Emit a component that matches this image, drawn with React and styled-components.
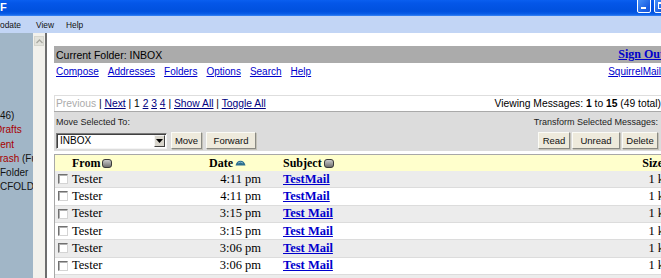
import React from 'react';
import styled, { createGlobalStyle } from 'styled-components';

const Global = createGlobalStyle`
  html, body { margin: 0; padding: 0; width: 661px; height: 278px; overflow: hidden; background: #fff; }
  #root { width: 661px; height: 278px; }
`;

const SANS = '"Liberation Sans", Arial, sans-serif';
const SERIF = '"Liberation Serif", "Times New Roman", serif';

const Window = styled.div`
  width: 661px;
  height: 278px;
  display: flex;
  flex-direction: column;
  overflow: hidden;
  font-family: ${SANS};
`;

const TitleBar = styled.div`
  height: 16px;
  flex: none;
  display: flex;
  justify-content: space-between;
  align-items: flex-start;
  overflow: hidden;
  background: linear-gradient(to bottom, #0a5ff0 0%, #0456e8 20%, #0051de 70%, #0a5ee8 88%, #3b86f4 100%);
`;

const TitleText = styled.span`
  color: #fff;
  font: bold 11px ${SANS};
  line-height: 15px;
`;

const WinButtons = styled.div`
  display: flex;
  gap: 3px;
  margin-top: -2px;
  margin-right: -7px;
`;

const WinButton = styled.span`
  position: relative;
  width: 14px;
  height: 15px;
  box-sizing: border-box;
  border: 1px solid #fff;
  border-radius: 2px;
  background: linear-gradient(135deg, #4a94fa, #1b5fe2 70%, #1a56d6);
  &::after {
    content: '';
    position: absolute;
    box-sizing: border-box;
    ${(p) =>
      p.kind === 'min'
        ? 'left: 3px; bottom: 3px; width: 5px; height: 2px; background: #fff;'
        : 'left: 3px; top: 3px; width: 8px; height: 7px; border: 1px solid #fff; border-top-width: 2px;'}
  }
`;

const MenuBar = styled.div`
  height: 17px;
  flex: none;
  display: flex;
  align-items: center;
  background: #c2d5f5;
  font: 8.4px ${SANS};
  color: #111;
`;

const MenuItem = styled.span`
  margin-left: ${(p) => p.offset}px;
`;

const Body = styled.div`
  flex: 1;
  display: flex;
  min-height: 0;
`;

const FolderPane = styled.div`
  width: 33px;
  flex: none;
  background: #a1b6c7;
  overflow: hidden;
  padding-top: 76px;
  box-sizing: border-box;
  font: 10px ${SANS};
`;

const PaneLine = styled.div`
  height: 14.3px;
  line-height: 14.3px;
  white-space: nowrap;
  color: ${(p) => (p.red ? '#a80000' : '#111')};
  margin-left: ${(p) => p.shift || 0}px;
`;

const Plain = styled.span`
  color: #111;
`;

const ScrollStrip = styled.div`
  width: 12px;
  flex: none;
  background: #f2f1ec;
  padding: 3px 0 0 1px;
  box-sizing: border-box;
`;

const ScrollUp = styled.div`
  width: 10px;
  height: 10px;
  background: #e3e3dc;
  border: 1px solid #d6d6ce;
  box-sizing: border-box;
  display: flex;
  align-items: center;
  justify-content: center;
`;

const Divider = styled.div`
  width: 2px;
  flex: none;
  background: #6e6e6e;
`;

const Content = styled.div`
  flex: 1;
  overflow: hidden;
  padding: 13px 0 0 7px;
`;

const Inner = styled.div`
  width: 607px;
`;

const FolderBar = styled.div`
  height: 17px;
  margin-right: -4px;
  background: #ababab;
  display: flex;
  justify-content: space-between;
  align-items: center;
  padding: 0 1px 0 2px;
  font-size: 10.5px;
  color: #000;
`;

const SignOut = styled.a`
  font: bold 12px ${SERIF};
  color: #0000cc;
  text-decoration: underline;
`;

const NavRow = styled.div`
  height: 17px;
  display: flex;
  justify-content: space-between;
  align-items: center;
  padding: 0 0 0 2px;
  font-size: 10px;
`;

const NavLinks = styled.div`
  display: flex;
  gap: 9px;
`;

const Link = styled.a`
  color: #0000cc;
  text-decoration: underline;
`;

const PagingRow = styled.div`
  margin-top: 15px;
  height: 15px;
  border-top: 1px solid #dedede;
  border-left: 1px solid #dedede;
  display: flex;
  justify-content: space-between;
  align-items: center;
  padding: 0 0 0 1px;
  font-size: 10.3px;
  color: #000;
  white-space: pre;
`;

const Disabled = styled.span`
  color: #ababab;
`;

const NavLink = styled.a`
  color: #000080;
  text-decoration: underline;
`;

const FormArea = styled.div`
  height: 40px;
  box-sizing: border-box;
  background: #dcdcdc;
  border-top: 1px solid #a9a9a9;
  display: flex;
  justify-content: space-between;
  padding: 5px 3px 0 2px;
  font-size: 9px;
`;

const FormCol = styled.div`
  display: flex;
  flex-direction: column;
  align-items: ${(p) => (p.right ? 'flex-end' : 'flex-start')};
  gap: 5px;
`;

const Label = styled.div`
  height: 10px;
  line-height: 10px;
  color: #222;
`;

const Controls = styled.div`
  display: flex;
  gap: ${(p) => p.gap}px;
  align-items: center;
`;

const Select = styled.div`
  width: 111px;
  height: 16px;
  box-sizing: border-box;
  background: #fff;
  border: 1px solid;
  border-color: #7b7b7b #f4f4f4 #f4f4f4 #7b7b7b;
  box-shadow: inset 1px 1px 0 #404040;
  display: flex;
  align-items: center;
  justify-content: space-between;
  padding: 0 1px 0 3px;
  font-size: 10px;
  color: #000;
`;

const SelectArrow = styled.span`
  width: 11px;
  height: 12px;
  box-sizing: border-box;
  background: #d8d5cc;
  border: 1px solid;
  border-color: #f4f4f4 #404040 #404040 #f4f4f4;
  display: flex;
  align-items: center;
  justify-content: center;
`;

const Button = styled.button`
  width: ${(p) => p.w}px;
  height: 17px;
  padding: 0;
  box-sizing: border-box;
  background: #eeeadc;
  border: 1px solid;
  border-color: #fbfbf6 #8a8a84 #8a8a84 #fbfbf6;
  box-shadow: 1px 1px 0 #c4c2b8;
  font: 9.5px ${SANS};
  color: #111;
`;

const Table = styled.div`
  margin-top: 3px;
  margin-right: -4px;
  border-top: 1px solid #a8a8a8;
  border-left: 1px solid #a8a8a8;
  font-family: ${SERIF};
`;

const Row = styled.div`
  display: grid;
  grid-template-columns: 15px 120px 90px 1fr 40px;
  align-items: center;
  height: ${(p) => (p.header ? 16 : 17.33)}px;
  box-sizing: border-box;
  background: ${(p) => (p.header ? '#ffffcc' : p.shade ? '#ececec' : '#ffffff')};
  border-bottom: ${(p) => (p.header ? 'none' : '1px solid #dcdcdc')};
  font-size: 12.5px;
  color: #000;
`;

const HeadCell = styled.div`
  display: flex;
  align-items: center;
  gap: 2px;
  font-weight: bold;
  font-size: 12px;
  padding-left: ${(p) => p.pl || 0}px;
  justify-content: ${(p) => (p.right ? 'flex-end' : 'flex-start')};
  padding-right: ${(p) => (p.right ? 2 : 0)}px;
`;

const Cell = styled.div`
  white-space: nowrap;
  text-align: ${(p) => (p.right ? 'right' : 'left')};
  padding-left: ${(p) => p.pl || 0}px;
  padding-right: ${(p) => p.pr || 0}px;
`;

const CheckCell = styled.div`
  display: flex;
  padding-left: 3px;
`;

const Check = styled.span`
  width: 10px;
  height: 10px;
  box-sizing: border-box;
  background: #fff;
  border: 1px solid;
  border-color: #707070 #d4d4d4 #d4d4d4 #707070;
  box-shadow: inset 1px 1px 0 #b0b0b0;
`;

const SubjectLink = styled.a`
  font-weight: bold;
  color: #0000cc;
  text-decoration: underline;
`;

const SortBox = () => (
  <svg width="10" height="9" viewBox="0 0 10 9">
    <defs>
      <linearGradient id="sg" x1="0" y1="0" x2="0" y2="1">
        <stop offset="0" stopColor="#d0d0d0" />
        <stop offset="1" stopColor="#6a6a6a" />
      </linearGradient>
    </defs>
    <rect x="0.5" y="0.5" width="9" height="8" rx="2.5" fill="url(#sg)" stroke="#3a3a3a" />
  </svg>
);

const SortUp = () => (
  <svg width="11" height="6" viewBox="0 0 11 6">
    <path d="M0.5 5.5 Q1.5 1 5.5 0.8 Q9.5 1 10.5 5.5 Z" fill="#2c6f8e" />
    <path d="M3 3 Q5.5 1.3 8 3" stroke="#7fb3c9" strokeWidth="1" fill="none" />
  </svg>
);

const Triangle = () => (
  <svg width="7" height="4" viewBox="0 0 7 4">
    <path d="M0 0 H7 L3.5 4 Z" fill="#000" />
  </svg>
);

const Chevron = () => (
  <svg width="7" height="5" viewBox="0 0 7 5">
    <path d="M0.5 4 L3.5 1 L6.5 4" stroke="#a8a8a0" strokeWidth="1.3" fill="none" />
  </svg>
);

const messages = [
  { time: '4:11 pm', subject: 'TestMail' },
  { time: '4:11 pm', subject: 'TestMail' },
  { time: '3:15 pm', subject: 'Test Mail' },
  { time: '3:15 pm', subject: 'Test Mail' },
  { time: '3:06 pm', subject: 'Test Mail' },
  { time: '3:06 pm', subject: 'Test Mail' },
  { time: '2:58 pm', subject: 'Test Mail' },
];

export default function App() {
  return (
    <Window>
      <Global />
      <TitleBar>
        <TitleText>F</TitleText>
        <WinButtons>
          <WinButton kind="min" />
          <WinButton kind="max" />
        </WinButtons>
      </TitleBar>
      <MenuBar>
        <MenuItem offset={0}>odate</MenuItem>
        <MenuItem offset={15}>View</MenuItem>
        <MenuItem offset={12}>Help</MenuItem>
      </MenuBar>
      <Body>
        <FolderPane>
          <PaneLine>46)</PaneLine>
          <PaneLine red shift={-5}>Drafts</PaneLine>
          <PaneLine red shift={-6.5}>Sent</PaneLine>
          <PaneLine red shift={-6}>
            Trash <Plain>(Full)</Plain>
          </PaneLine>
          <PaneLine>Folder</PaneLine>
          <PaneLine>CFOLDER</PaneLine>
        </FolderPane>
        <ScrollStrip>
          <ScrollUp>
            <Chevron />
          </ScrollUp>
        </ScrollStrip>
        <Divider />
        <Content>
          <Inner>
            <FolderBar>
              <span>Current Folder: INBOX</span>
              <SignOut>Sign Out</SignOut>
            </FolderBar>
            <NavRow>
              <NavLinks>
                <Link>Compose</Link>
                <Link>Addresses</Link>
                <Link>Folders</Link>
                <Link>Options</Link>
                <Link>Search</Link>
                <Link>Help</Link>
              </NavLinks>
              <Link>SquirrelMail</Link>
            </NavRow>
            <PagingRow>
              <span>
                <Disabled>Previous</Disabled> | <NavLink>Next</NavLink> | 1 <NavLink>2</NavLink> <NavLink>3</NavLink>{' '}
                <NavLink>4</NavLink> | <NavLink>Show All</NavLink> | <NavLink>Toggle All</NavLink>
              </span>
              <span>
                Viewing Messages: <b>1</b> to <b>15</b> (49 total)
              </span>
            </PagingRow>
            <FormArea>
              <FormCol>
                <Label>Move Selected To:</Label>
                <Controls gap={4}>
                  <Select>
                    <span>INBOX</span>
                    <SelectArrow>
                      <Triangle />
                    </SelectArrow>
                  </Select>
                  <Button w={31}>Move</Button>
                  <Button w={50}>Forward</Button>
                </Controls>
              </FormCol>
              <FormCol right>
                <Label>Transform Selected Messages:</Label>
                <Controls gap={2}>
                  <Button w={32}>Read</Button>
                  <Button w={48}>Unread</Button>
                  <Button w={36}>Delete</Button>
                </Controls>
              </FormCol>
            </FormArea>
            <Table>
              <Row header>
                <span />
                <HeadCell pl={2}>
                  From <SortBox />
                </HeadCell>
                <HeadCell pl={19}>
                  Date <SortUp />
                </HeadCell>
                <HeadCell pl={3}>
                  Subject <SortBox />
                </HeadCell>
                <HeadCell right>Size</HeadCell>
              </Row>
              {messages.map((m, i) => (
                <Row key={i} shade={i % 2 === 0}>
                  <CheckCell>
                    <Check />
                  </CheckCell>
                  <Cell pl={2}>Tester</Cell>
                  <Cell right pr={19}>
                    {m.time}
                  </Cell>
                  <Cell pl={3}>
                    <SubjectLink>{m.subject}</SubjectLink>
                  </Cell>
                  <Cell right pr={1}>
                    1 k
                  </Cell>
                </Row>
              ))}
            </Table>
          </Inner>
        </Content>
      </Body>
    </Window>
  );
}
